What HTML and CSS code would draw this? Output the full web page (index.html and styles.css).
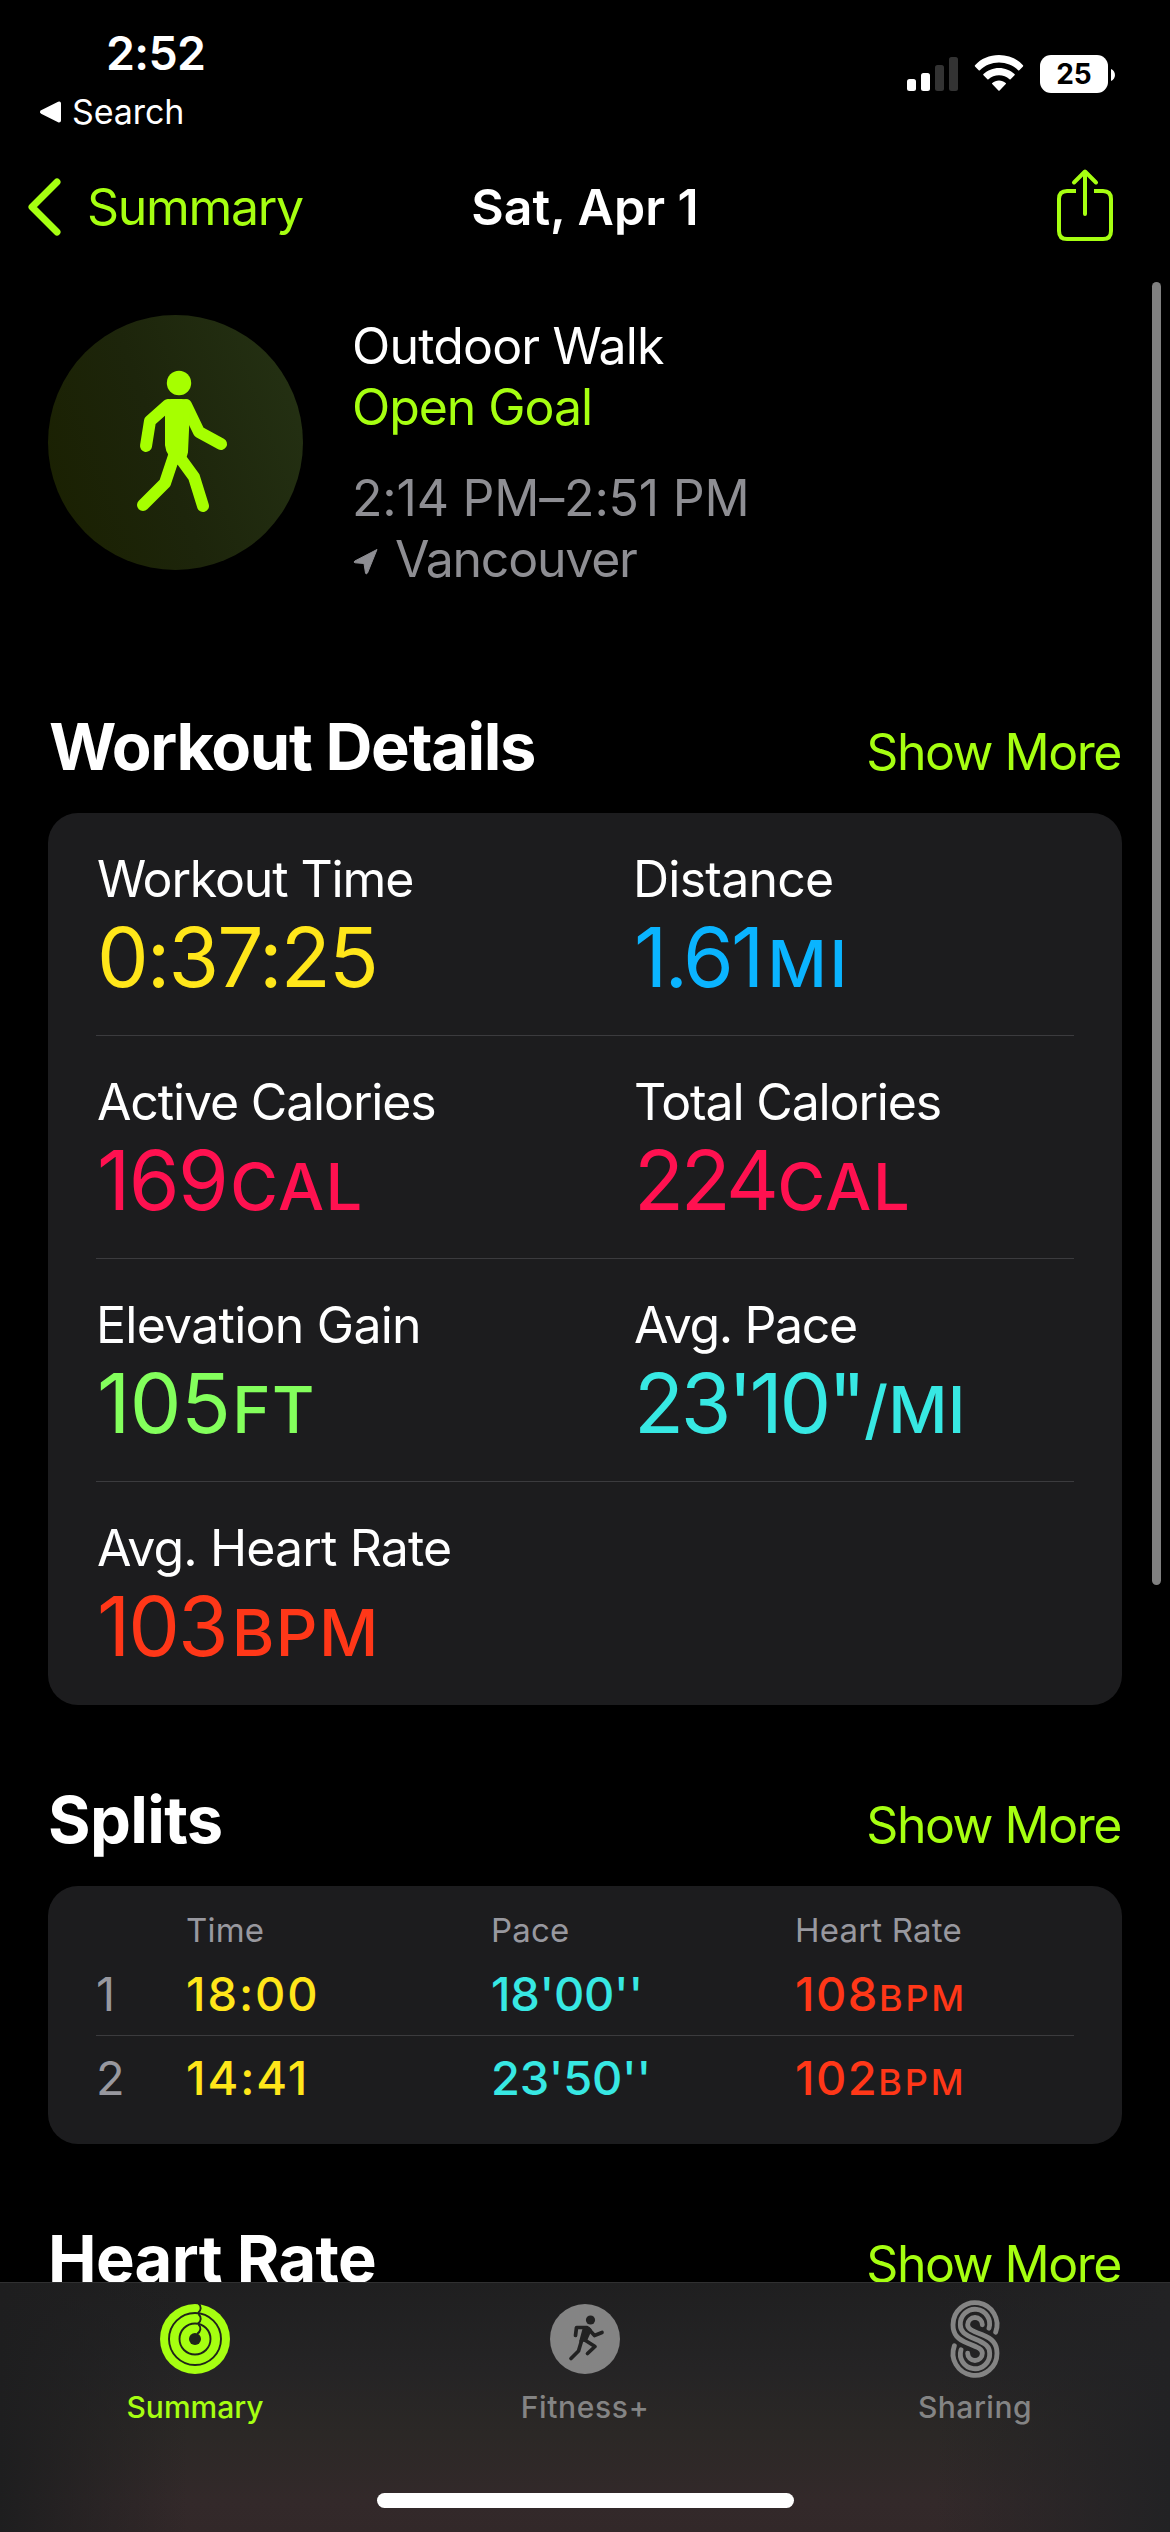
FILE: index.html
```html
<!DOCTYPE html>
<html lang="en">
<head>
<meta charset="utf-8">
<title>Sat, Apr 1</title>
<link rel="stylesheet" href="styles.css">
</head>
<body>
<div class="screen">
  <header class="status-bar">
    <div class="status-left">
      <div class="clock">2:52</div>
      <div class="back-app">
        <svg width="23" height="22" viewBox="0 0 23 22"><path d="M20 2.5V19.500L3 11Z" fill="#fff" stroke="#fff" stroke-width="4" stroke-linejoin="round"/></svg>
        <span>Search</span>
      </div>
    </div>
    <div class="status-right">
      <svg class="signal" width="51" height="34" viewBox="0 0 51 34"><g fill="#fff"><rect y="22" width="9" height="12" rx="2.500"/><rect x="14" y="16" width="9" height="18" rx="2.500"/></g><g fill="#333"><rect x="28" y="8" width="9" height="26" rx="2.500"/><rect x="42" width="9" height="34" rx="2.500"/></g></svg>
      <svg class="wifi" width="48" height="36" viewBox="0 0 48 36"><path fill="#fff" d="M24 0C33.500 0 42 3.700 48 10.200C48.300 10.600 48.300 11 48 11.400L44.300 15.200C43.900 15.500 43.500 15.500 43.100 15.200C38 10.400 31.300 7.600 24 7.600S10 10.400 4.900 15.200C4.500 15.500 4.100 15.500 3.700 15.200L0 11.400C-.3 11-.3 10.600 0 10.200C6 3.700 14.500 0 24 0ZM24 12.900C30 12.900 35.400 15.200 39.500 19.100C39.900 19.500 39.900 19.900 39.500 20.300L35.600 24.200C35.300 24.500 34.900 24.500 34.500 24.200C31.700 21.700 28 20.200 24 20.200S16.300 21.700 13.500 24.200C13.100 24.500 12.700 24.500 12.400 24.200L8.500 20.300C8.100 19.900 8.100 19.500 8.500 19.100C12.600 15.200 18 12.900 24 12.900ZM24 25.500C26.500 25.500 28.800 26.400 30.700 27.900C31.100 28.300 31.100 28.700 30.800 29.100L24.600 35.400C24.200 35.800 23.800 35.800 23.400 35.400L17.200 29.100C16.900 28.700 16.900 28.300 17.300 27.900C19.200 26.400 21.500 25.500 24 25.500Z"/></svg>
      <div class="battery">25</div>
      <svg class="battery-tip" width="4" height="12" viewBox="0 0 4 12"><path d="M0 0C5.300 2 5.300 10 0 12Z" fill="#fff"/></svg>
    </div>
  </header>

  <nav class="nav-bar">
    <a class="back">
      <svg width="33" height="58" viewBox="0 0 33 58"><path d="M29 4L4 29L29 54" fill="none" stroke="#a6ff11" stroke-width="7" stroke-linecap="round" stroke-linejoin="round"/></svg>
      <span>Summary</span>
    </a>
    <h1>Sat, Apr 1</h1>
    <svg class="share" width="56" height="72" viewBox="0 0 56 72" fill="none" stroke="#a6ff11" stroke-width="4"><path d="M19 22H10Q2 22 2 30V62Q2 70 10 70H46Q54 70 54 62V30Q54 22 46 22H37"/><path d="M28 3V45M17 13.500L28 2.500L39 13.500" stroke-linecap="round" stroke-linejoin="round"/></svg>
  </nav>

  <main>
    <section class="hero">
      <div class="badge">
        <svg width="255" height="255" viewBox="0 0 255 255" fill="none" stroke="#a6ff00" stroke-width="12" stroke-linecap="round" stroke-linejoin="round">
          <circle cx="131" cy="68" r="12.200" fill="#a6ff00" stroke="none"/>
          <path d="M120 90L102 106L98 131M138 90L151 117L173 129"/>
          <path d="M123 87H134Q139 87 139 93L137 137Q136 143 131 145Q121 140 120 130V93Q120 87 123 87Z" fill="#a6ff00" stroke-width="6"/>
          <path d="M126 141L117 168L95 190M130 140L146 162L155 191"/>
        </svg>
      </div>
      <div class="hero-text">
        <div class="activity">Outdoor Walk</div>
        <div class="goal">Open Goal</div>
        <div class="period">2:14 PM–2:51 PM</div>
        <div class="place">
          <svg width="26" height="27" viewBox="0 0 26 27"><path d="M24 1.500L1.800 13Q0 14.300 2.300 14.800L11 15.500L12.500 25Q13.200 27 14.500 25Z" fill="#8e8e93" stroke="#8e8e93" stroke-linejoin="round"/></svg>
          <span>Vancouver</span>
        </div>
      </div>
    </section>

    <section>
      <div class="section-head"><h2 class="details-title">Workout Details</h2><a>Show More</a></div>
      <div class="card details">
        <div class="detail-row">
          <div class="metric"><div class="label">Workout Time</div><div class="value time">0:37:25</div></div>
          <div class="metric"><div class="label distance-label">Distance</div><div class="value distance">1.61<span class="unit">MI</span></div></div>
        </div>
        <div class="detail-row">
          <div class="metric"><div class="label">Active Calories</div><div class="value active-cal">169<span class="unit">CAL</span></div></div>
          <div class="metric"><div class="label">Total Calories</div><div class="value total-cal">224<span class="unit">CAL</span></div></div>
        </div>
        <div class="detail-row">
          <div class="metric"><div class="label elevation-label">Elevation Gain</div><div class="value elevation">105<span class="unit">FT</span></div></div>
          <div class="metric"><div class="label pace-label">Avg. Pace</div><div class="value pace">23'10"<span class="unit">/MI</span></div></div>
        </div>
        <div class="detail-row">
          <div class="metric"><div class="label heart-label">Avg. Heart Rate</div><div class="value heart">103<span class="unit">BPM</span></div></div>
        </div>
      </div>
    </section>

    <section>
      <div class="section-head"><h2>Splits</h2><a>Show More</a></div>
      <div class="card splits">
        <div class="split-head"><span></span><span>Time</span><span>Pace</span><span>Heart Rate</span></div>
        <div class="split-row"><span class="index">1</span><span class="split-time">18:00</span><span class="split-pace">18'00''</span><span class="split-heart">108<span class="split-unit">BPM</span></span></div>
        <div class="split-row"><span class="index">2</span><span class="split-time">14:41</span><span class="split-pace">23'50''</span><span class="split-heart">102<span class="split-unit">BPM</span></span></div>
      </div>
    </section>

    <section>
      <div class="section-head"><h2>Heart Rate</h2><a>Show More</a></div>
    </section>
  </main>

  <div class="scrollbar"></div>

  <footer class="tab-bar">
    <div class="tabs">
      <a class="tab active">
        <svg width="90" height="80" viewBox="-45 -40 90 80" fill="none"><circle r="35" fill="#a6ff11"/><g stroke="#1f241b" stroke-width="1.900"><circle r="26"/><circle r="15.500"/><path d="M3.500-35.500C6.500-33 6.500-28.500 3-26M3.500-25C6.500-22 6.500-18 3-15.500M3.500-14.500C6.500-12 6-7.500 2-5"/></g><circle r="6" fill="#1f241b"/></svg>
        <span>Summary</span>
      </a>
      <a class="tab">
        <svg width="90" height="80" viewBox="-45 -40 90 80" fill="none"><circle r="35" fill="#848484"/><g stroke="#222" stroke-width="3.700" stroke-linecap="round" stroke-linejoin="round"><circle cx="5.500" cy="-19" r="4.600" fill="#222" stroke="none"/><path d="M-9.500-3.500L-8.500-11.500H2M3.500-10L9.500-3.500L17-6.500M-1 .5L10 7.500L2.500 14.500M-3.500 2L-6.500 12L-14 19.500"/><path d="M-1-11L3.500-11L5.500-9L1 1L-4.500 2Z" fill="#222" stroke-width="2.500"/></g></svg>
        <span class="fitness">Fitness+</span>
      </a>
      <a class="tab">
        <svg width="50" height="80" viewBox="148 88.500 150 240" fill="none" stroke="#848484" stroke-width="14.500" stroke-linecap="round"><path d="M285 188A66 66 0 1 0 157 166C157 195 171 209 201 221C231 233 245 238 245 251A22 22 0 1 1 201 251"/><path d="M265 176A44 44 0 1 0 179 166C179 186 191 195 223 208.500C255 222 267 231 267 251A44 44 0 1 1 181 241"/><path d="M245 166A22 22 0 1 0 201 166C201 179 215 184 245 196C275 208 289 222 289 251A66 66 0 1 1 161 229"/></svg>
        <span class="sharing">Sharing</span>
      </a>
    </div>
    <div class="home-indicator"></div>
  </footer>
</div>
</body>
</html>
```
FILE: styles.css
```css
* { box-sizing: border-box; }
body { margin: 0; background: #000; }
h1, h2 { margin: 0; }
svg { display: block; flex: none; overflow: visible; }

.screen {
  position: relative;
  width: 1170px;
  height: 2532px;
  overflow: hidden;
  background: #000;
  color: #fff;
  font-family: Inter, "Liberation Sans", sans-serif;
  font-size: 50px;
  line-height: 50px;
  letter-spacing: -1px;
  white-space: nowrap;
}

/* Status bar */
.status-bar { display: flex; justify-content: space-between; height: 153px; padding: 0 55px 0 39px; }
.status-left { padding-top: 30px; }
.clock { padding-left: 67px; font-size: 46.5px; font-weight: 600; line-height: 46px; letter-spacing: -.68px; }
.back-app { display: flex; align-items: center; gap: 10px; margin-top: 19px; font-size: 34px; line-height: 34px; letter-spacing: -.1px; }
.status-right { display: flex; align-items: flex-start; padding-top: 55px; }
.signal { margin: 2px 17px 0 0; }
.wifi { margin-right: 17px; }
.battery {
  width: 68px;
  height: 38px;
  border-radius: 11px;
  background: #fff;
  color: #000;
  font-size: 28px;
  font-weight: 700;
  line-height: 38px;
  letter-spacing: 0;
  text-align: center;
}
.battery-tip { margin: 14px 0 0 3px; }

/* Navigation */
.nav-bar { display: grid; grid-template-columns: 1fr auto 1fr; align-items: center; height: 108px; padding: 0 57px 0 57px; color: #a6ff11; }
.back { display: flex; align-items: center; gap: 26px; margin-left: -29px; letter-spacing: -1.32px; }
.nav-bar h1 { color: #fff; font-size: 50px; font-weight: 600; letter-spacing: 0; }
.share { justify-self: end; margin-top: -4px; }

/* Workout overview */
.hero { display: flex; gap: 49px; height: 274px; margin: 54px 0 118px 48px; }
.badge { width: 255px; height: 255px; border-radius: 50%; background: linear-gradient(70deg, #1a2000, #1d250b 45%, #253214); }
.hero-text { padding-top: 1px; line-height: 61px; }
.activity { letter-spacing: -.82px; }
.goal { color: #a6ff11; letter-spacing: -1.06px; }
.period { margin-top: 30px; color: #8e8e93; letter-spacing: -.2px; }
.place { display: flex; align-items: center; gap: 16px; color: #8e8e93; letter-spacing: -1.24px; }
.place svg { margin: 3px 0 0 1px; }

/* Sections */
.section-head { display: flex; justify-content: space-between; align-items: baseline; height: 78px; margin: 0 49px 28px 48px; padding-top: 1px; line-height: 78px; }
.section-head h2 { font-size: 65px; font-weight: 700; letter-spacing: -.65px; }
.section-head .details-title { letter-spacing: -1.36px; padding-left: 1px; }
.section-head a { color: #a6ff11; letter-spacing: -1.48px; }
.card { margin: 0 48px 75px; padding: 0 48px; border-radius: 30px; background: #1c1c1e; }

/* Workout details */
.detail-row { display: grid; grid-template-columns: 537px 1fr; height: 223px; padding-top: 41px; border-bottom: 1px solid #3b3b3e; }
.detail-row:last-child { border-bottom: 0; }
.label { padding-left: 1px; letter-spacing: -1.15px; }
.distance-label, .elevation-label { padding-left: 0; letter-spacing: -.75px; }
.pace-label { letter-spacing: -1.37px; }
.heart-label { letter-spacing: -.87px; }
.value { margin-top: 13px; padding-left: 1px; font-size: 82px; line-height: 82px; }
.unit { margin-left: 3px; font-size: 65px; font-weight: 500; line-height: 1; letter-spacing: 1.5px; }
.time { color: #ffe61a; letter-spacing: -1.9px; }
.distance { color: #0ab4ff; letter-spacing: -2.9px; }
.distance .unit { margin-left: 6px; letter-spacing: 2.7px; }
.active-cal { color: #ff1150; letter-spacing: -1.6px; }
.total-cal { color: #ff1150; letter-spacing: -3.37px; }
.total-cal .unit { margin-left: 2px; }
.elevation { color: #83ff5c; letter-spacing: -.54px; }
.elevation .unit { margin-left: 2px; }
.pace { color: #37e8e3; letter-spacing: -3.27px; }
.pace .unit { margin-left: 1px; letter-spacing: .3px; }
.heart { color: #ff3718; letter-spacing: -2.04px; }
.heart .unit { margin-left: 5px; }

/* Splits */
.splits { height: 258px; }
.split-head, .split-row { display: grid; grid-template-columns: 90px 305px 304px 1fr; }
.split-head { height: 66px; padding-top: 28px; color: #98989f; font-size: 33px; line-height: 33px; letter-spacing: .2px; }
.split-row { height: 84px; padding-top: 18px; border-bottom: 1px solid #3b3b3e; font-size: 47px; font-weight: 450; line-height: 47px; }
.split-row:last-child { border-bottom: 0; }
.index { color: #98989f; font-weight: 400; }
.split-time { color: #ffe61a; letter-spacing: 1.9px; }
.split-pace { color: #37e8e3; letter-spacing: -.3px; }
.split-heart { color: #ff3718; letter-spacing: 1.5px; }
.split-unit { font-size: 36px; font-weight: 550; line-height: 1; letter-spacing: 2.8px; }

.scrollbar { position: absolute; top: 282px; right: 9px; width: 9px; height: 1303px; border-radius: 5px; background: #808080; }

/* Tab bar */
.tab-bar {
  position: absolute;
  inset: 2282px 0 0;
  border-top: 1px solid #303031;
  background:
    linear-gradient(90deg, #1e1e1f 0, #1e1e1f00 16%, #1e1e1f00 80%, #222224 100%),
    linear-gradient(#1f1f20 0, #252425 35%, #2b2826 60%, #33292a 88%, #322829);
}
.tabs { display: grid; grid-template-columns: repeat(3, 390px); padding-top: 16px; }
.tab { display: flex; flex-direction: column; align-items: center; gap: 13px; color: #848484; font-size: 30px; font-weight: 500; line-height: 30px; letter-spacing: 0; }
.tab.active { color: #a6ff11; }
.fitness { letter-spacing: .65px; }
.sharing { letter-spacing: .5px; }
.home-indicator { width: 417px; height: 15px; margin: 71px auto 0; border-radius: 8px; background: #fff; }
```
